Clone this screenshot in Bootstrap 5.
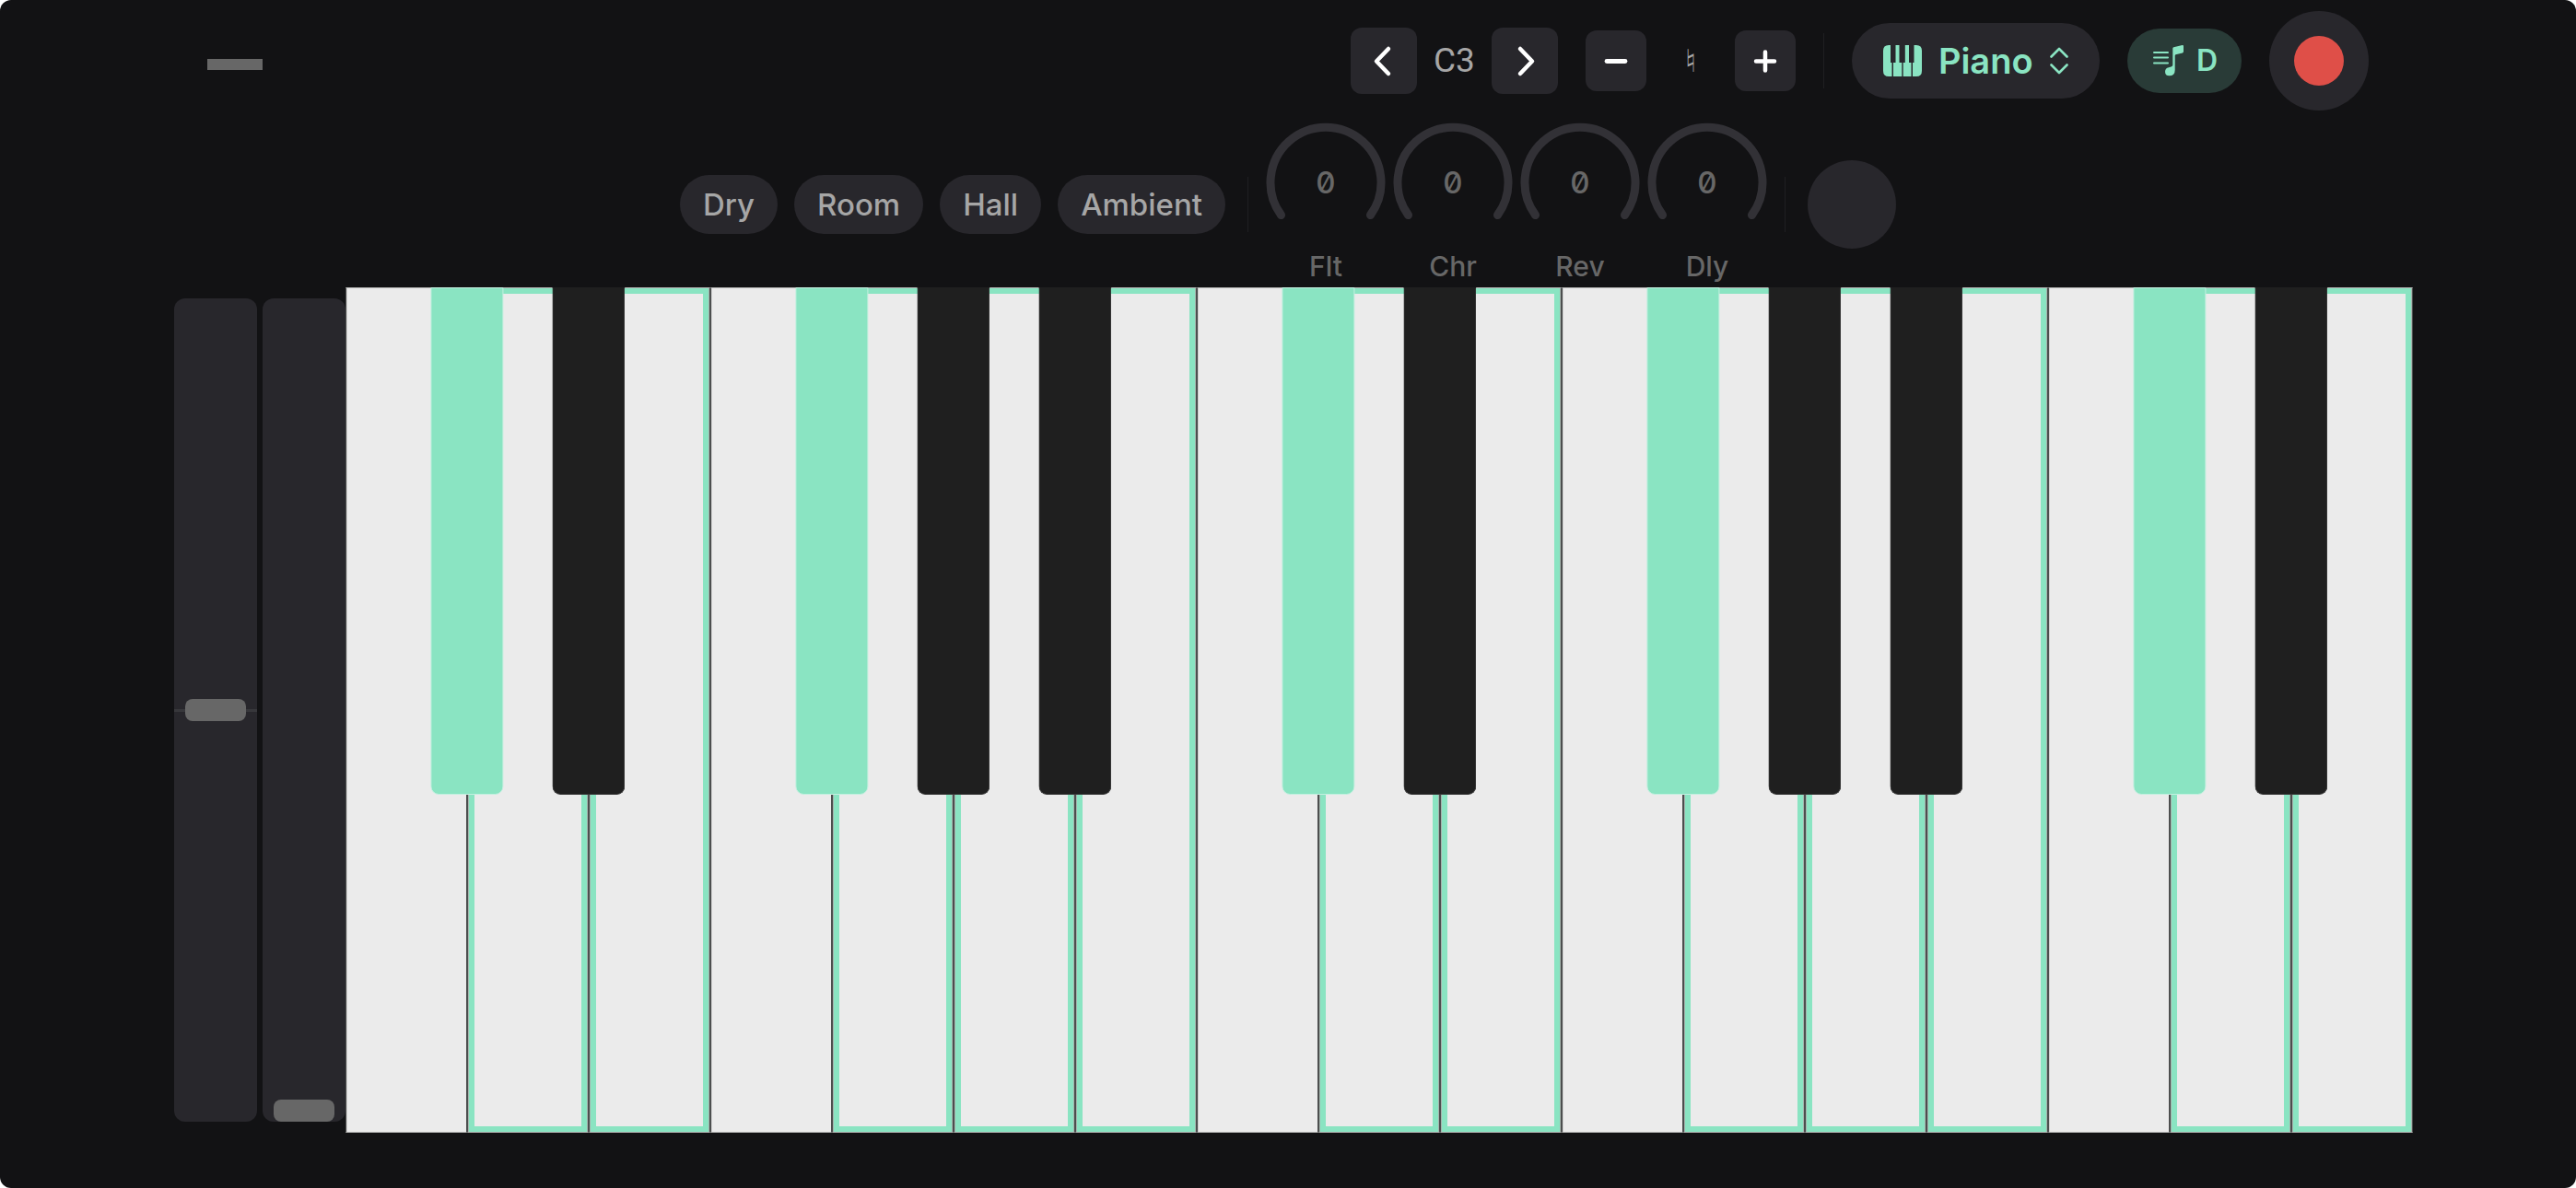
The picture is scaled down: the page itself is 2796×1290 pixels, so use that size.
<!DOCTYPE html>
<html lang="en">
<head>
<meta charset="utf-8">
<meta name="viewport" content="width=device-width, initial-scale=1">
<title>Keyboard</title>
<link rel="stylesheet" href="https://cdn.jsdelivr.net/npm/bootstrap@5.3.0/dist/css/bootstrap.min.css">
<style>
:root { --ink:#121214; --panel:#28272c; --mint:#8ae4c2; --soft:#a6a6a6; --dim:#676767; }
body { background:#fff; font-family:Inter,"Liberation Sans",sans-serif; }
.studio { background:var(--ink); border-radius:12px; padding-bottom:60px; }
.topbar { height:132px; padding:0 225px; }
.tools { gap:30px; }
.stepper { gap:18px; }
.handle { width:60px; height:12px; background:var(--dim); margin-top:8px; }
.tile { width:72px; height:72px; border-radius:12px; background:var(--panel); color:#fff; }
.tile-sm { width:66px; height:66px; }
.tile:hover, .chip:hover, .orb:hover { background:#33323a; color:#fff; }
.octave { min-width:45px; font:400 37px/44px Roboto,sans-serif; color:var(--soft); }
.accidental { min-width:60px; font:400 34px/40px "DejaVu Sans",sans-serif; color:var(--soft); }
.rule { width:1px; height:60px; background:#1f1f22; }
.voice { height:82px; padding:0 34px; gap:18px; background:var(--panel); color:var(--mint); }
.voice select { appearance:none; background:none; border:0; padding:0; color:inherit; font-size:38px; line-height:48px; font-weight:600; outline:0; }
.scale-btn { height:70px; padding:0 26px 0 28px; gap:14px; background:#293b37; color:var(--mint); font-size:32px; line-height:40px; font-weight:600; }
.record { width:108px; height:108px; background:var(--panel); }
.record-dot { width:54px; height:54px; background:#df4f48; }
.effects { height:180px; gap:18px; }
.chips { gap:18px; margin-right:6px; }
.chip { height:64px; padding:0 25px; background:var(--panel); color:var(--soft); font-size:33px; line-height:40px; font-weight:500; }
.knobs { gap:6px; }
.knob { width:132px; height:180px; color:var(--dim); }
.dial { height:132px; }
.dial-value { font-size:33px; line-height:40px; font-weight:500; font-feature-settings:"zero"; }
.knob-name { font-size:30px; line-height:36px; font-weight:500; margin-top:7px; }
.orb { width:96px; height:96px; background:var(--panel); margin-left:6px; }
.deck { padding:0 177px 0 189px; min-height:400px; }
.strips { gap:6px; padding:12px 0; }
.strip { appearance:none; writing-mode:vertical-lr; direction:rtl; width:90px; height:auto; margin:0; border-radius:12px; background:var(--panel); cursor:pointer; }
.strip-bend { background:linear-gradient(#37373b,#37373b) center/100% 3px no-repeat var(--panel); }
.strip::-webkit-slider-thumb { appearance:none; width:66px; height:24px; border-radius:8px; background:var(--dim); }
.strip::-moz-range-thumb { width:66px; height:24px; border:0; border-radius:8px; background:var(--dim); }
.slot { flex:1 1 0; }
.ivory { background:#ebebeb; border:1px solid #4c4e4e; border-top-color:#b4b4b4; border-bottom-color:#b4b4b4; padding:0; box-shadow:inset 1px 0 #cfcfcf; }
.ivory.lit { box-shadow:inset 1px 0 #a5b5ae, inset -1px 0 #a5b5ae, inset 7px 0 var(--mint), inset -7px 0 var(--mint), inset 0 6px var(--mint), inset 0 -6px var(--mint); }
.ebony { position:absolute; z-index:2; top:0; left:100%; width:60%; height:60%; transform:translateX(-50%); padding:0; border:1px solid #3a3a3a; border-top-color:#1f1f1f; border-radius:0 0 9px 9px; background:#1f1f1f; }
.ebony.lit { background:var(--mint); border-color:#c4f0e0; }
</style>
<script src="https://cdn.jsdelivr.net/npm/bootstrap@5.3.0/dist/js/bootstrap.bundle.min.js"></script>
</head>
<body>
<div class="studio d-flex flex-column min-vh-100">
  <header class="topbar d-flex align-items-center justify-content-between">
    <div class="handle"></div>
    <div class="tools d-flex align-items-center">
      <div class="stepper d-flex align-items-center">
        <button type="button" class="tile btn border-0 p-0 d-flex align-items-center justify-content-center" aria-label="Octave down">
          <svg width="30" height="36" viewBox="0 0 30 36" fill="none" stroke="currentColor" stroke-width="4.5" stroke-linecap="round" stroke-linejoin="round"><path d="M20 5 7 18.500 20 32"/></svg>
        </button>
        <span class="octave text-center">C3</span>
        <button type="button" class="tile btn border-0 p-0 d-flex align-items-center justify-content-center" aria-label="Octave up">
          <svg width="30" height="36" viewBox="0 0 30 36" fill="none" stroke="currentColor" stroke-width="4.5" stroke-linecap="round" stroke-linejoin="round"><path d="M10 5 23 18.500 10 32"/></svg>
        </button>
      </div>
      <div class="stepper d-flex align-items-center">
        <button type="button" class="tile tile-sm btn border-0 p-0 d-flex align-items-center justify-content-center" aria-label="Flatten">
          <svg width="30" height="30" viewBox="0 0 30 30" stroke="currentColor" stroke-width="4.800" stroke-linecap="round"><path d="M5 15.500H25"/></svg>
        </button>
        <span class="accidental text-center">♮</span>
        <button type="button" class="tile tile-sm btn border-0 p-0 d-flex align-items-center justify-content-center" aria-label="Sharpen">
          <svg width="30" height="30" viewBox="0 0 30 30" stroke="currentColor" stroke-width="4.500" stroke-linecap="round"><path d="M5 15.500H25M15 5.500V25.500"/></svg>
        </button>
      </div>
      <div class="rule"></div>
      <label class="voice rounded-pill d-flex align-items-center" for="voice">
        <svg width="42" height="34" viewBox="0 0 42 34"><path fill="currentColor" d="M6 0H8V19H9.500V34H6Q0 34 0 28V6Q0 0 6 0ZM13.500 0H17.500V19H20.300V34H11V19H13.500ZM23.800 0H28V19H30.500V34H21.700V19H23.800ZM33.500 0H36Q42 0 42 6V28Q42 34 36 34H32V19H33.500Z"/></svg>
        <select id="voice" aria-label="Instrument"><option>Piano</option></select>
        <svg width="20" height="30" viewBox="0 0 20 30" fill="none" stroke="currentColor" stroke-width="2.600" stroke-linecap="round" stroke-linejoin="round"><path d="M1.500 10.500 10 2 18.500 10.500M1.500 19.500 10 28 18.500 19.500"/></svg>
      </label>
      <button type="button" class="scale-btn btn border-0 rounded-pill d-flex align-items-center" aria-label="Scale D">
        <svg width="33" height="34" viewBox="0 0 33 34"><path stroke="currentColor" stroke-width="2" stroke-linecap="round" d="M1 8H16M1 13.500H16M1 19.500H16"/><path fill="currentColor" d="M21.300 3.500Q21.300 2.500 22.300 2.200L31.700 .1Q33 -.1 33 1.200V7Q33 8 32 8.400L24.500 10.200Q23.700 10.500 23.700 11.500V27Q23.700 33.300 17.500 33.300 13 33.300 13 28.800 13 25 17 24.200L19.500 23.600Q21.300 23.200 21.300 21.500Z"/></svg>
        <span>D</span>
      </button>
      <button type="button" class="record btn border-0 p-0 rounded-circle d-flex align-items-center justify-content-center" aria-label="Record"><span class="record-dot rounded-circle"></span></button>
    </div>
  </header>

  <section class="effects d-flex align-items-center justify-content-center">
    <div class="chips d-flex">
      <button type="button" class="chip btn border-0 rounded-pill">Dry</button>
      <button type="button" class="chip btn border-0 rounded-pill">Room</button>
      <button type="button" class="chip btn border-0 rounded-pill">Hall</button>
      <button type="button" class="chip btn border-0 rounded-pill">Ambient</button>
    </div>
    <div class="rule"></div>
    <div class="knobs d-flex" id="knobs"></div>
    <div class="rule"></div>
    <button type="button" class="orb btn border-0 p-0 rounded-circle" aria-label="Effect pad"></button>
  </section>

  <main class="deck d-flex flex-grow-1">
    <div class="strips d-flex align-items-stretch">
      <input class="strip strip-bend" type="range" min="-100" max="100" value="0" aria-label="Pitch bend">
      <input class="strip" type="range" min="0" max="100" value="0" aria-label="Modulation">
    </div>
    <div class="d-flex flex-grow-1" id="keys"></div>
  </main>
</div>
<script>
document.getElementById('knobs').innerHTML = ['Flt', 'Chr', 'Rev', 'Dly'].map(name => `
  <div class="knob text-center" role="slider" tabindex="0" aria-label="${name}" aria-valuemin="0" aria-valuemax="100" aria-valuenow="0">
    <div class="dial position-relative d-flex align-items-center justify-content-center">
      <svg class="position-absolute top-0 start-0" width="132" height="130" viewBox="0 0 132 130" fill="none" stroke="#323136" stroke-width="9" stroke-linecap="round"><path d="M17.500 101.500A60 60 0 1 1 114.500 101.500"/></svg>
      <span class="dial-value">0</span>
    </div>
    <div class="knob-name">${name}</div>
  </div>`).join('');

// Seventeen white keys from C3 to E5; the lit notes belong to the D scale.
const notes = ['C', 'D', 'E', 'F', 'G', 'A', 'B'];
const lit = new Set(['D', 'E', 'G', 'A', 'B', 'C#', 'F#']);
let html = '';
for (let i = 0; i < 17; i++) {
  const note = notes[i % 7], octave = 3 + Math.floor(i / 7), sharp = note + '#';
  html += `<div class="slot position-relative d-flex"><button type="button" class="ivory flex-fill ${lit.has(note) ? 'lit' : ''}" aria-label="${note}${octave}"></button>`;
  if (i < 16 && note !== 'E' && note !== 'B')
    html += `<button type="button" class="ebony ${lit.has(sharp) ? 'lit' : ''}" aria-label="${sharp}${octave}"></button>`;
  html += '</div>';
}
document.getElementById('keys').innerHTML = html;
</script>
</body>
</html>
